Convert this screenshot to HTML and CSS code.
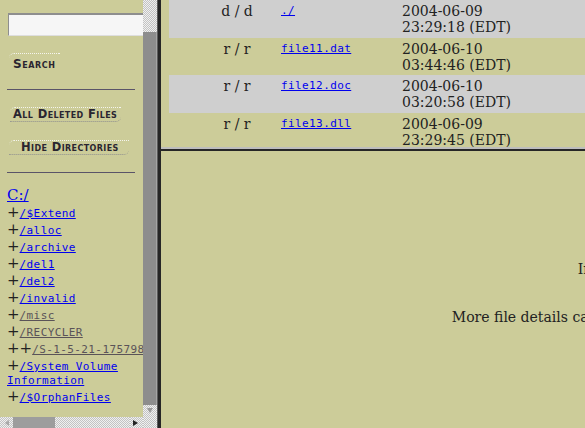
FILE: index.html
```html
<!DOCTYPE html>
<html>
<head>
<meta charset="utf-8">
<title>File Browsing</title>
<link rel="stylesheet" href="styles.css">
</head>
<body>
<div class="screen">
  <div class="left">
    <div class="left-view">
      <div class="left-content">
        <input class="search-box" type="text">
        <div class="btn btn-search">Search</div>
        <div class="rule rule-1"></div>
        <div class="btn btn-deleted">All Deleted Files</div>
        <div class="btn btn-hide">Hide Directories</div>
        <div class="rule rule-2"></div>
        <div class="tree">
          <a class="root" href="#">C:/</a>
          <div class="node"><span class="plus">+</span><a href="#">/$Extend</a></div>
          <div class="node"><span class="plus">+</span><a href="#">/alloc</a></div>
          <div class="node"><span class="plus">+</span><a href="#">/archive</a></div>
          <div class="node"><span class="plus">+</span><a href="#">/del1</a></div>
          <div class="node"><span class="plus">+</span><a href="#">/del2</a></div>
          <div class="node"><span class="plus">+</span><a href="#">/invalid</a></div>
          <div class="node"><span class="plus">+</span><a class="visited" href="#">/misc</a></div>
          <div class="node"><span class="plus">+</span><a class="visited" href="#">/RECYCLER</a></div>
          <div class="node nowrap"><span class="plus">+</span><span class="plus">+</span><a class="visited" href="#">/S-1-5-21-1757981266-507921405-1957994488-1003</a></div>
          <div class="node"><span class="plus">+</span><a href="#">/System Volume Information</a></div>
          <div class="node"><span class="plus">+</span><a href="#">/$OrphanFiles</a></div>
        </div>
      </div>
    </div>
    <div class="vscroll">
      <div class="track vtrack-top"></div>
      <div class="vthumb"></div>
      <div class="track varrow"><span class="tri-down"></span></div>
    </div>
    <div class="hscroll">
      <div class="track harrow-l"><span class="tri-left"></span></div>
      <div class="hthumb"></div>
      <div class="track htrack"></div>
      <div class="track harrow-r"><span class="tri-right"></span></div>
    </div>
    <div class="track corner"></div>
  </div>
  <div class="vdivider"></div>
  <div class="right">
    <div class="top-frame">
      <table class="files">
        <tr class="row-gray">
          <td class="c-flag"></td><td class="c-type">d / d</td>
          <td class="c-name"><a href="#">./</a></td>
          <td class="c-date">2004-06-09<br>23:29:18 (EDT)</td>
        </tr>
        <tr class="row-plain">
          <td class="c-flag"></td><td class="c-type">r / r</td>
          <td class="c-name"><a href="#">file11.dat</a></td>
          <td class="c-date">2004-06-10<br>03:44:46 (EDT)</td>
        </tr>
        <tr class="row-gray">
          <td class="c-flag"></td><td class="c-type">r / r</td>
          <td class="c-name"><a href="#">file12.doc</a></td>
          <td class="c-date">2004-06-10<br>03:20:58 (EDT)</td>
        </tr>
        <tr class="row-plain">
          <td class="c-flag"></td><td class="c-type">r / r</td>
          <td class="c-name"><a href="#">file13.dll</a></td>
          <td class="c-date">2004-06-09<br>23:29:45 (EDT)</td>
        </tr>
      </table>
    </div>
    <div class="hdivider"></div>
    <div class="bottom-frame">
      <div class="help">
        File Analysis Mode<br><br>
        In this mode, you can view file and directory contents.<br><br>
        File contents will be shown in this window.<br>
        More file details can be found using the Metadata link at the end of the list (on the right).<br>
        You can also sort the files using the column headers
      </div>
    </div>
  </div>
</div>
</body>
</html>
```

FILE: styles.css
```css
* { box-sizing: border-box; }

html, body {
  margin: 0;
  padding: 0;
}

body {
  width: 585px;
  height: 428px;
  overflow: hidden;
  background: #cccc99;
  color: #222;
  font-family: "DejaVu Serif", serif;
}

a { color: #0000ee; }
a.visited { color: #5a5358; }

.screen {
  display: flex;
  width: 585px;
  height: 428px;
}

/* ---------- left frame ---------- */
.left {
  flex: none;
  width: 157px;
  display: grid;
  grid-template-columns: 143px 14px;
  grid-template-rows: 417px 11px;
}

.left-view {
  overflow: hidden;
  background: #cccc99;
}

.left-content {
  width: 144px;
  padding: 13px 0 0 8px;
}

.search-box {
  display: block;
  width: 160px;
  height: 23px;
  margin: 0;
  padding: 0;
  background: #f6f6f6;
  border: 1px solid #dedede;
  border-top: 2px solid #8e8e8e;
  border-left: 1px solid #8e8e8e;
}

.btn {
  width: fit-content;
  font-family: "DejaVu Sans", sans-serif;
  font-weight: bold;
  font-variant: small-caps;
  font-size: 11.5px;
  line-height: 13px;
  letter-spacing: 0.4px;
  color: #2a2530;
  border-top: 1px dotted #f4f4ee;
  border-top-left-radius: 5px;
}

.btn-search {
  margin: 17px 0 0 1px;
  padding: 4px 4px 3px 4px;
  font-size: 12px;
  letter-spacing: 0.6px;
}

.btn-deleted {
  margin: 17px 0 0 2px;
  padding: 0 4px 0 3px;
  border-bottom: 1px dotted #8f8f8f;
  border-bottom-right-radius: 5px;
}

.btn-hide {
  margin: 18px 0 0 1px;
  padding: 0 10px 0 12px;
  border-bottom: 1px dotted #8f8f8f;
  border-bottom-right-radius: 5px;
}

.rule {
  width: 128px;
  height: 1px;
  margin-left: -1px;
  background: #5a5468;
}

.rule-1 { margin-top: 15px; }
.rule-2 { margin-top: 17px; }

.tree {
  margin: 14px 0 0 -1px;
  font-family: "DejaVu Sans Mono", monospace;
  font-size: 11px;
  line-height: 14px;
  letter-spacing: 0.4px;
}

.root {
  display: block;
  font-family: "DejaVu Serif", serif;
  font-size: 15px;
  line-height: 17px;
  letter-spacing: 0;
  width: fit-content;
}

.nowrap { white-space: nowrap; }

.plus {
  font-family: "DejaVu Serif", serif;
  font-size: 15px;
  line-height: 17px;
  letter-spacing: 0;
  color: #222;
}

/* scrollbars */
.track {
  background: repeating-conic-gradient(#f0f0f0 0 25%, #c3c3c3 0 50%) 0 0 / 2px 2px;
}

.vscroll {
  display: flex;
  flex-direction: column;
}

.vtrack-top { height: 32px; flex: none; }

.vthumb {
  flex: 1;
  background: #8d8d8d;
  border-right: 1px solid #a4a4a4;
}

.varrow {
  height: 12px;
  flex: none;
  display: flex;
  justify-content: center;
  padding-top: 3px;
}

.tri-down {
  width: 0;
  height: 0;
  border-left: 3px solid transparent;
  border-right: 3px solid transparent;
  border-top: 5px solid #9a9a9a;
}

.hscroll {
  display: flex;
}

.harrow-l {
  width: 13px;
  flex: none;
  display: flex;
  align-items: center;
  padding-left: 5px;
}

.tri-left {
  width: 0;
  height: 0;
  border-top: 3px solid transparent;
  border-bottom: 3px solid transparent;
  border-right: 4px solid #a8a8a8;
}

.hthumb {
  width: 42px;
  flex: none;
  background: #9d9d9d;
}

.htrack { flex: 1; }

.harrow-r {
  width: 13px;
  flex: none;
  display: flex;
  align-items: center;
  padding-left: 3px;
}

.tri-right {
  width: 0;
  height: 0;
  border-top: 3px solid transparent;
  border-bottom: 3px solid transparent;
  border-left: 5px solid #222;
}

/* ---------- dividers ---------- */
.vdivider {
  flex: none;
  width: 4px;
  background: #262626;
  border-left: 1px solid #5c5c5c;
}

.right {
  flex: 1;
  min-width: 0;
  display: flex;
  flex-direction: column;
}

.top-frame {
  flex: none;
  height: 147px;
  overflow: hidden;
  padding-left: 8px;
}

.hdivider {
  flex: none;
  height: 4px;
  border-top: 2px solid #bdbdbd;
  background: #262626;
}

.bottom-frame {
  flex: 1;
  overflow: hidden;
  padding: 77px 0 0 8px;
}

/* ---------- file table ---------- */
.files {
  border-collapse: collapse;
  width: 440px;
  table-layout: fixed;
  font-size: 14px;
}

.files td {
  vertical-align: top;
  padding: 3px 2px 2.5px 2px;
  line-height: 16px;
}

.row-gray { background: #cfcfcf; }
.row-plain { background: #cccc99; }

.c-flag { width: 26px; }
.c-type { width: 84px; text-align: center; }
.c-name {
  width: 121px;
  font-family: "DejaVu Sans Mono", monospace;
  font-size: 11px;
  letter-spacing: 0.4px;
}
.c-name a { line-height: 13px; }
.c-date { width: 209px; }

/* ---------- help text ---------- */
.help {
  width: 1204px;
  text-align: center;
  font-size: 14px;
  line-height: 16.3px;
}
```
